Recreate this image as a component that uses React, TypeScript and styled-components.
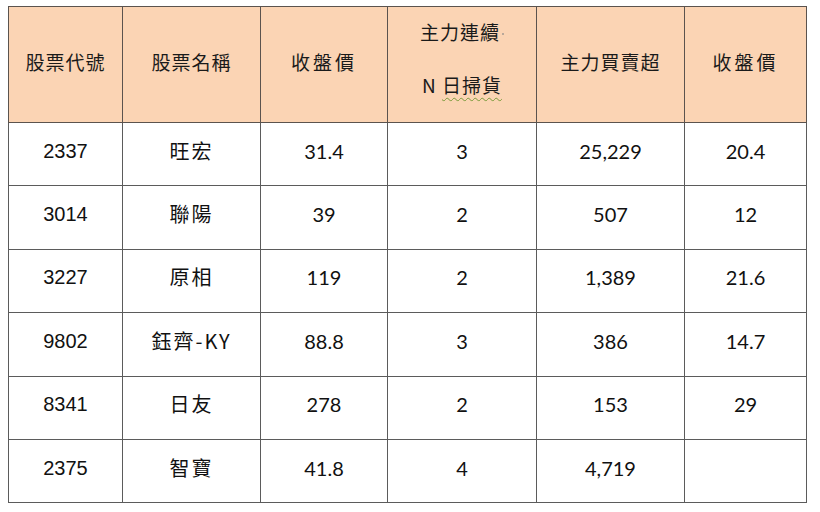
import styled, { createGlobalStyle } from "styled-components";

const GlobalStyle = createGlobalStyle`
  html, body {
    margin: 0;
    padding: 0;
    background: #ffffff;
  }
`;

type Row = {
  code: string;
  name: string;
  close: string;
  days: string;
  net: string;
  close2: string;
};

const rows: Row[] = [
  { code: "2337", name: "旺宏", close: "31.4", days: "3", net: "25,229", close2: "20.4" },
  { code: "3014", name: "聯陽", close: "39", days: "2", net: "507", close2: "12" },
  { code: "3227", name: "原相", close: "119", days: "2", net: "1,389", close2: "21.6" },
  { code: "9802", name: "鈺齊-KY", close: "88.8", days: "3", net: "386", close2: "14.7" },
  { code: "8341", name: "日友", close: "278", days: "2", net: "153", close2: "29" },
  { code: "2375", name: "智寶", close: "41.8", days: "4", net: "4,719", close2: "" },
];

const colWidths = [114, 138, 127, 149, 148, 122];

function App() {
  return (
    <Page>
      <GlobalStyle />
      <Table>
        <colgroup>
          {colWidths.map((w, i) => (
            <col key={i} style={{ width: w }} />
          ))}
        </colgroup>
        <thead>
          <tr>
            <HeadCell>股票代號</HeadCell>
            <HeadCell>股票名稱</HeadCell>
            <HeadCell $wide>收盤價</HeadCell>
            <HeadCell>
              <StackedTitle>
                <span>
                  主力連續<Dot />
                </span>
                <span>
                  N <Squiggle>日掃貨</Squiggle>
                </span>
              </StackedTitle>
            </HeadCell>
            <HeadCell>主力買賣超</HeadCell>
            <HeadCell $wide>收盤價</HeadCell>
          </tr>
        </thead>
        <tbody>
          {rows.map((r) => (
            <tr key={r.code}>
              <Cell $font="code">{r.code}</Cell>
              <Cell $font="name">{r.name}</Cell>
              <Cell>{r.close}</Cell>
              <Cell>{r.days}</Cell>
              <Cell>{r.net}</Cell>
              <Cell>{r.close2}</Cell>
            </tr>
          ))}
        </tbody>
      </Table>
    </Page>
  );
}

const Page = styled.div`
  padding: 6px 0 0 8px;
`;

const Table = styled.table`
  border-collapse: collapse;
  table-layout: fixed;
  width: 799px;
  color: #111;
`;

const HeadCell = styled.th<{ $wide?: boolean }>`
  height: 109px;
  padding: 0 0 6px;
  background: #fbd4b4;
  border: 1px solid #5b534e;
  font-family: "Noto Sans CJK TC", "Noto Sans", sans-serif;
  font-size: 19px;
  font-weight: 400;
  letter-spacing: ${(p) => (p.$wide ? "3px" : "1px")};
  text-align: center;
  vertical-align: middle;
  color: #1a1a1a;
`;

const StackedTitle = styled.div`
  display: flex;
  flex-direction: column;
  align-items: center;
  gap: 26px;
  margin-top: -8px;
`;

const Dot = styled.i`
  display: inline-block;
  width: 2px;
  height: 2px;
  margin-left: 2px;
  background: #b9a89a;
  vertical-align: middle;
`;

const Squiggle = styled.span`
  text-decoration: underline wavy #7a9a3a;
  text-decoration-thickness: 1px;
  text-underline-offset: 4px;
`;

const Cell = styled.td<{ $font?: "code" | "name" | "num" }>`
  height: 55.4px;
  padding: 0 0 7px;
  border: 1px solid #5b5b5b;
  text-align: center;
  vertical-align: middle;
  font-family: ${(p) =>
    p.$font === "code"
      ? `"Liberation Sans", Arial, sans-serif`
      : p.$font === "name"
      ? `"Noto Sans CJK TC", "Noto Sans", sans-serif`
      : `Lato, "Open Sans", sans-serif`};
  font-size: 20px;
  font-weight: 400;
  line-height: 24px;
  letter-spacing: ${(p) => (p.$font === "name" ? "2px" : "0")};
`;

export default App;
